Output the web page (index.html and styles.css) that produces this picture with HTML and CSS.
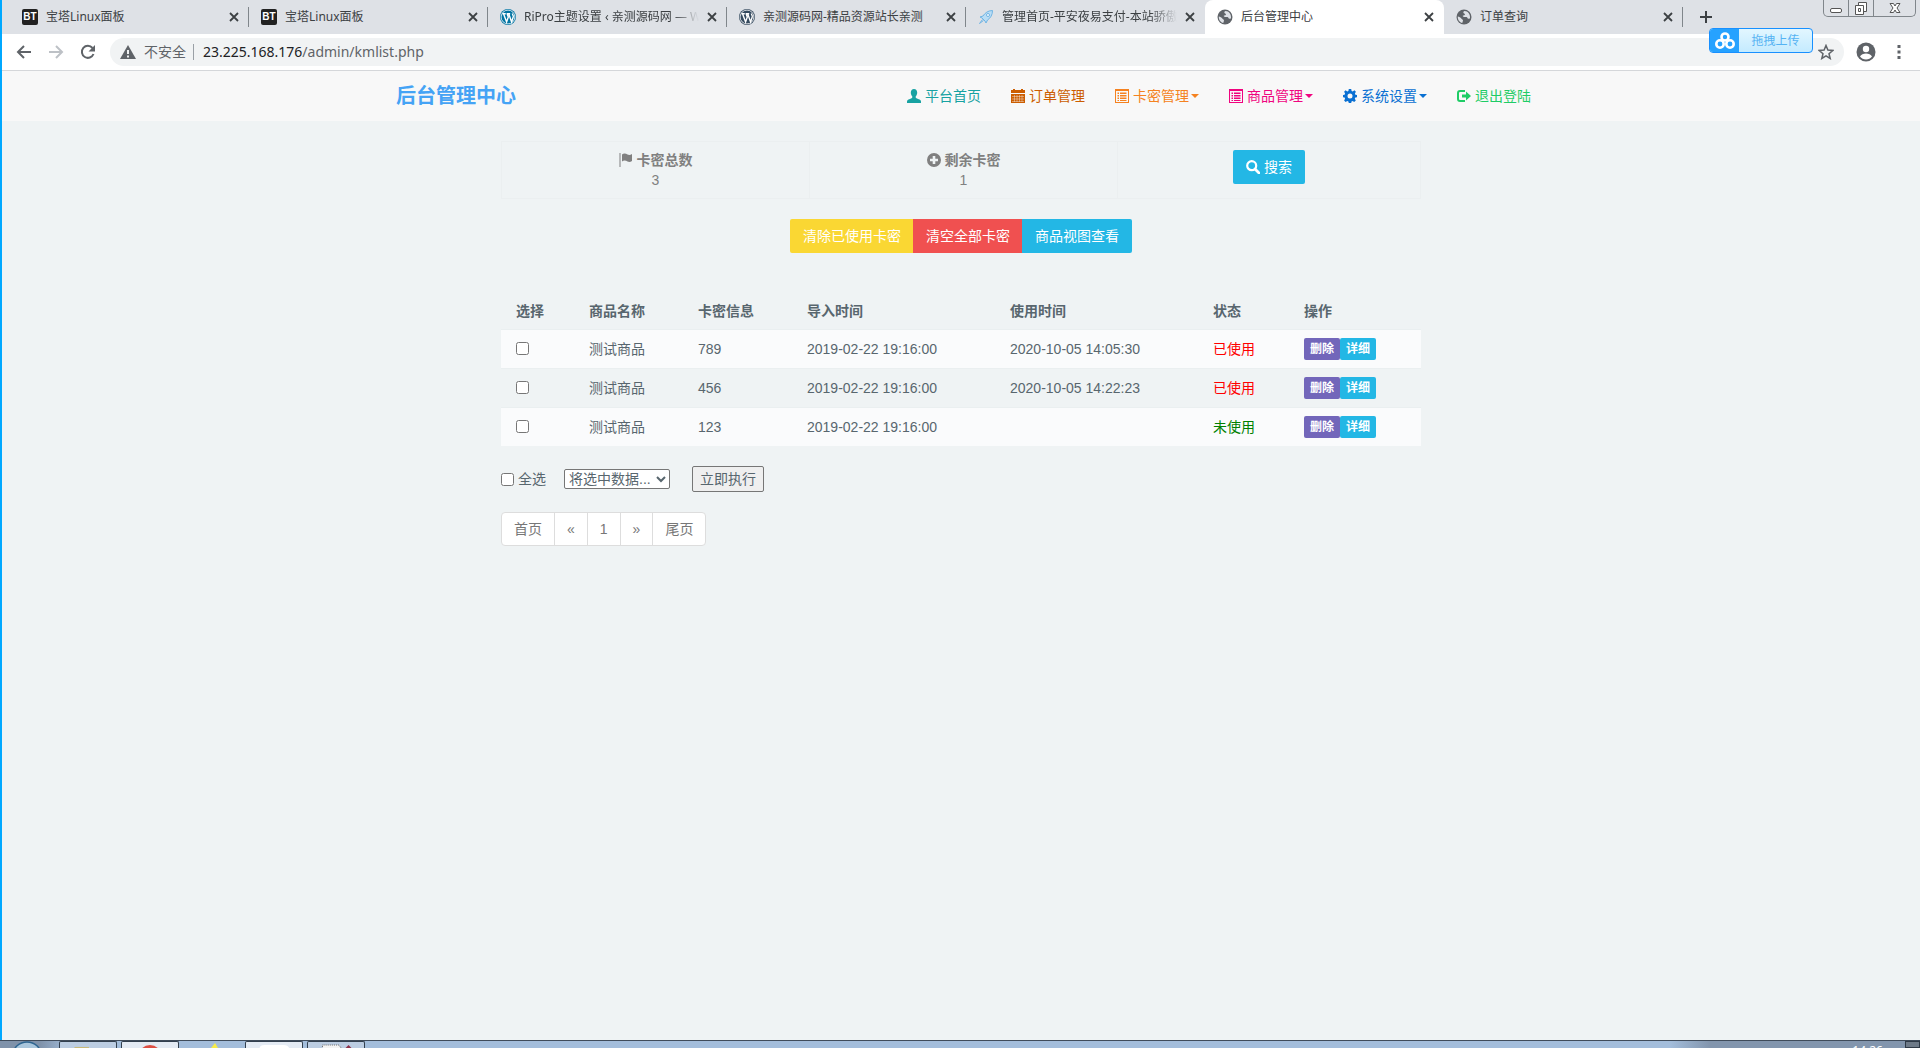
FILE: index.html
```html
<!DOCTYPE html>
<html lang="zh-CN">
<head>
<meta charset="utf-8">
<title>后台管理中心</title>
<link rel="stylesheet" href="styles.css">
</head>
<body>
<svg class="sprite" aria-hidden="true">
  <symbol id="close" viewBox="0 0 10 10"><path d="M1 1l8 8M9 1L1 9" stroke="#3c4043" stroke-width="1.8" fill="none"/></symbol>
  <symbol id="wp" viewBox="0 0 16 16"><circle cx="8" cy="8" r="8" fill="currentColor"/><circle cx="8" cy="8" r="6.9" fill="none" stroke="#fff" stroke-width=".8"/><path d="M2.4 4.8h3.4M3.6 5l3 8L8.3 8 7.2 5M6.6 4.8h3.6M8.8 5l2.8 8 1.6-5c.4-1.500-.8-2.200-.8-3.600" fill="none" stroke="#fff" stroke-width="1.400"/></symbol>
  <symbol id="globe" viewBox="0 0 16 16"><circle cx="8" cy="8" r="7.500" fill="#5f6368"/><path d="M8.500 2c-1.500.5-1.500 1.800-.3 2.500C9.500 5 9 6.500 7.500 6.500 6 6.500 7 8 8.500 8h2c1 .3 1 1.500 1.800 1.700L14 9.500C14.500 5 12 2.200 8.500 2zM1.800 7.500c1.500.5 2.700.8 3.500 2 .5 1 1.700.7 1.700 2 0 .9-.8 1.500-.6 2.600C3.500 13.500 1.600 10.800 1.800 7.500z" fill="#dee1e6"/></symbol>
</svg>
<div class="window">
<header class="browser">
  <div class="tabs">
    <div class="tab"><span class="favicon bt">BT</span><span class="name">宝塔Linux面板</span><button class="x" aria-label="关闭"><svg><use href="#close"/></svg></button></div>
    <div class="tab"><span class="favicon bt">BT</span><span class="name">宝塔Linux面板</span><button class="x" aria-label="关闭"><svg><use href="#close"/></svg></button></div>
    <div class="tab"><svg class="favicon wp-blue"><use href="#wp"/></svg><span class="name fade">RiPro主题设置 ‹ 亲测源码网 — W</span><button class="x" aria-label="关闭"><svg><use href="#close"/></svg></button></div>
    <div class="tab"><svg class="favicon wp-dark"><use href="#wp"/></svg><span class="name">亲测源码网-精品资源站长亲测</span><button class="x" aria-label="关闭"><svg><use href="#close"/></svg></button></div>
    <div class="tab before-active"><svg class="favicon" viewBox="0 0 16 16"><path d="M14.500 1.500C10 1.500 7 4 5 7L2 8l2 1 3 3 1 2 1.500-3c3-2 5-5 5-9.500z" fill="#b9ddf5" stroke="#6fb4e4"/><circle cx="10" cy="6" r="1.500" fill="#fff" stroke="#6fb4e4"/><path d="M4.500 10.500L1.500 14.500 5.500 11.500" stroke="#6fb4e4" fill="none"/></svg><span class="name fade">管理首页-平安夜易支付-本站骄傲</span><button class="x" aria-label="关闭"><svg><use href="#close"/></svg></button></div>
    <div class="tab active"><svg class="favicon"><use href="#globe"/></svg><span class="name">后台管理中心</span><button class="x" aria-label="关闭"><svg><use href="#close"/></svg></button></div>
    <div class="tab"><svg class="favicon"><use href="#globe"/></svg><span class="name">订单查询</span><button class="x" aria-label="关闭"><svg><use href="#close"/></svg></button></div>
    <button class="newtab" aria-label="新标签页"><svg viewBox="0 0 12 12"><path d="M6 0v12M0 6h12" stroke="#3c4043" stroke-width="2"/></svg></button>
  </div>
  <div class="controls">
    <button aria-label="最小化"><svg viewBox="0 0 24 16"><rect x="6.500" y="8.500" width="11" height="4" rx="1.500" fill="#fff" stroke="#555"/></svg></button>
    <button aria-label="还原"><svg viewBox="0 0 24 16"><path d="M9.500 2.500h8v9h-8z" fill="#fff" stroke="#555"/><path d="M6.500 5.500h8v9h-8z" fill="#fff" stroke="#555"/><path d="M9.500 8.500h2v3h-2z" fill="#fff" stroke="#555"/></svg></button>
    <button class="wide" aria-label="关闭窗口"><svg viewBox="0 0 24 16"><path d="M7 3.500h3.500L12 6l1.500-2.500H17L14 8l3 4.500h-3.500L12 10l-1.500 2.500H7L10 8z" fill="#fff" stroke="#555"/></svg></button>
  </div>
  <div class="toolbar">
    <button class="tool" aria-label="后退"><svg viewBox="0 0 16 16"><path d="M15 8H2M8 2L2 8l6 6" fill="none" stroke="#5f6368" stroke-width="2"/></svg></button>
    <button class="tool" aria-label="前进"><svg viewBox="0 0 16 16"><path d="M1 8h13M8 2l6 6-6 6" fill="none" stroke="#bdc1c6" stroke-width="2"/></svg></button>
    <button class="tool" aria-label="刷新"><svg viewBox="0 0 16 16"><path d="M13.500 10A6 6 0 1 1 12.500 4" fill="none" stroke="#5f6368" stroke-width="2"/><path d="M15 1v6.500H8.500z" fill="#5f6368"/></svg></button>
    <div class="address">
      <svg class="warn" viewBox="0 0 16 14"><path d="M8 0l8 14H0z" fill="#5f6368"/><path d="M8 5v4M8 10.500v2" stroke="#f1f3f4" stroke-width="2"/></svg>
      <span class="unsafe">不安全</span>
      <span class="url"><b>23.225.168.176</b>/admin/kmlist.php</span>
      <svg class="star" viewBox="0 0 16 16"><path d="M8 1.500l1.900 4.600 4.900.4-3.800 3.200 1.200 4.800L8 11.900l-4.200 2.600L5 9.700 1.200 6.500l4.900-.4z" fill="none" stroke="#5f6368" stroke-width="1.500"/></svg>
    </div>
    <button class="user" aria-label="用户"><svg viewBox="0 0 20 20"><circle cx="10" cy="10" r="9.500" fill="#5f6368"/><circle cx="10" cy="7" r="3.200" fill="#fff"/><path d="M4 14.500c1-2 3.500-3 6-3s5 1 6 3c-1.500 1.800-3.500 3-6 3s-4.500-1.200-6-3z" fill="#fff"/></svg></button>
    <button class="more" aria-label="更多"><svg viewBox="0 0 4 14"><path d="M.5 0h3v3h-3zM.5 5.500h3v3h-3zM.5 11h3v3h-3z" fill="#5f6368"/></svg></button>
  </div>
  <button class="upload"><span class="cloud"><svg viewBox="0 0 20 18"><g fill="none" stroke="#fff" stroke-width="2.600"><circle cx="10" cy="5" r="3.500"/><circle cx="5" cy="12" r="3.700"/><circle cx="15" cy="12" r="3.700"/></g></svg></span><span class="label">拖拽上传</span></button>
</header>
<nav class="navbar">
  <div class="container">
    <a class="brand" href="#">后台管理中心</a>
    <div class="menu">
      <a class="teal" href="#"><svg viewBox="0 0 14 14"><path d="M7 0c2 0 3.200 1.500 3.200 3.600 0 1.700-.7 3-1.500 3.900-.2.900.1 1.300.8 1.700 2 .9 4.500 1.400 4.500 3.300V14H0v-1.500c0-1.900 2.500-2.400 4.500-3.300.7-.4 1-.8.8-1.700-.8-.9-1.500-2.200-1.500-3.900C3.800 1.500 5 0 7 0z"/></svg>平台首页</a>
      <a class="brown" href="#"><svg viewBox="0 0 14 14"><path d="M0 1h2V0h2v1h6V0h2v1h2v3H0zM0 5h14v9H0z"/><path d="M1 7.500h12M1 10h12M1 12.500h12M3.500 6v7M6 6v7M8.500 6v7M11 6v7" stroke="#f8f8f8" stroke-width=".4"/></svg>订单管理</a>
      <a class="orange" href="#"><svg viewBox="0 0 14 14"><path fill-rule="evenodd" d="M0 0h14v14H0zM1 2h12v11H1zM2.500 3.500h1.500V5H2.500zM5 3.500h6.500V5H5zM2.500 6h1.500v1.500H2.500zM5 6h6.500v1.500H5zM2.500 8.500h1.500V10H2.500zM5 8.500h6.500V10H5zM2.500 11h1.500v1H2.500zM5 11h6.500v1H5z"/></svg>卡密管理<i class="caret"></i></a>
      <a class="pink" href="#"><svg viewBox="0 0 14 14"><path fill-rule="evenodd" d="M0 0h14v14H0zM1 2h12v11H1zM2.500 3.500h1.500V5H2.500zM5 3.500h6.500V5H5zM2.500 6h1.500v1.500H2.500zM5 6h6.500v1.500H5zM2.500 8.500h1.500V10H2.500zM5 8.500h6.500V10H5zM2.500 11h1.500v1H2.500zM5 11h6.500v1H5z"/></svg>商品管理<i class="caret"></i></a>
      <a class="blue" href="#"><svg viewBox="0 0 14 14"><path fill-rule="evenodd" d="M5.800 0h2.400l.4 1.900 1.100.5 1.700-1.100 1.500 1.500-1 1.700.5 1.200 1.600.3v2.200l-1.700.4-.5 1.200 1 1.600-1.600 1.600-1.600-1-1.100.5L8.200 14H5.800l-.4-1.500-1.100-.5-1.700 1-1.500-1.600 1-1.600-.5-1.200L0 8.200V6l1.600-.3.5-1.200-1-1.700 1.500-1.500 1.700 1.100 1.100-.5zM7 4.500a2.500 2.500 0 1 0 0 5 2.500 2.500 0 1 0 0-5z"/></svg>系统设置<i class="caret"></i></a>
      <a class="green" href="#"><svg viewBox="0 0 14 14"><path d="M8 2H3Q1 2 1 4v6q0 2 2 2h5" fill="none" stroke="currentColor" stroke-width="2"/><path d="M9 2.500L14 7l-5 4.500V8.500H5v-3h4z"/></svg>退出登陆</a>
    </div>
  </div>
</nav>
<main class="content">
  <section class="stats">
    <div class="stat"><strong><svg viewBox="0 0 14 14"><path d="M.5 0h1v14h-1zM3 1.500c2-1.500 4-.8 5.500 0s3 .5 4.500-.5V8c-1.500 1-3 1.300-4.500.5S5 7 3 8.500z"/></svg>卡密总数</strong><span>3</span></div>
    <div class="stat"><strong><svg viewBox="0 0 14 14"><path fill-rule="evenodd" d="M7 0a7 7 0 1 0 0 14A7 7 0 1 0 7 0zM5.700 3h2.600v2.700H11v2.600H8.300V11H5.700V8.300H3V5.700h2.700z"/></svg>剩余卡密</strong><span>1</span></div>
    <div class="stat"><button class="btn info rounded"><svg viewBox="0 0 14 14"><circle cx="5.700" cy="5.700" r="4.500" fill="none" stroke="#fff" stroke-width="2.200"/><path d="M9 9l4 4" stroke="#fff" stroke-width="2.800" stroke-linecap="round"/></svg>搜索</button></div>
  </section>
  <div class="actions"><button class="btn warning">清除已使用卡密</button><button class="btn danger">清空全部卡密</button><button class="btn info">商品视图查看</button></div>
  <table class="cards">
    <colgroup><col class="c-pick"><col class="c-mid"><col class="c-mid"><col class="c-time"><col class="c-time"><col class="c-state"><col></colgroup>
    <thead><tr><th>选择</th><th>商品名称</th><th>卡密信息</th><th>导入时间</th><th>使用时间</th><th>状态</th><th>操作</th></tr></thead>
    <tbody>
      <tr><td><input type="checkbox" aria-label="选择 789"></td><td>测试商品</td><td>789</td><td>2019-02-22 19:16:00</td><td>2020-10-05 14:05:30</td><td class="used">已使用</td><td><div class="ops"><button class="xs purple">删除</button><button class="xs info">详细</button></div></td></tr>
      <tr><td><input type="checkbox" aria-label="选择 456"></td><td>测试商品</td><td>456</td><td>2019-02-22 19:16:00</td><td>2020-10-05 14:22:23</td><td class="used">已使用</td><td><div class="ops"><button class="xs purple">删除</button><button class="xs info">详细</button></div></td></tr>
      <tr><td><input type="checkbox" aria-label="选择 123"></td><td>测试商品</td><td>123</td><td>2019-02-22 19:16:00</td><td></td><td class="unused">未使用</td><td><div class="ops"><button class="xs purple">删除</button><button class="xs info">详细</button></div></td></tr>
    </tbody>
  </table>
  <form class="batch">
    <label><input type="checkbox">全选</label>
    <select aria-label="批量操作"><option>将选中数据...</option></select>
    <button type="button">立即执行</button>
  </form>
  <nav class="pages"><a href="#">首页</a><a href="#">«</a><a href="#">1</a><a href="#">»</a><a href="#">尾页</a></nav>
</main>
</div>
<footer class="taskbar">
  <svg class="start" viewBox="0 0 32 7"><ellipse cx="16" cy="14" rx="14" ry="13" fill="#a9c6dc" stroke="#2e6590" stroke-width="1.500"/></svg>
  <div class="task"><svg viewBox="0 0 58 7"><path d="M15 5h15v2H15z" fill="#c8b878"/></svg></div>
  <div class="task bright"><svg viewBox="0 0 58 7"><circle cx="29" cy="15" r="12" fill="#dd4f43"/></svg></div>
  <div class="plain"><svg viewBox="0 0 58 7"><path d="M28 7l4-5 3 5z" fill="#f7ec4a"/></svg></div>
  <div class="task bright"><svg viewBox="0 0 58 7"><path d="M14 7q0-4 5-4h20q5 0 6 4z" fill="#fff"/></svg></div>
  <div class="task"><svg viewBox="0 0 58 7"><path d="M15 7V3h17l3 4" fill="#f4f4f4" stroke="#666" stroke-dasharray="1 1"/><path d="M38 7l4-4 3 3-1 1z" fill="#8c3048"/></svg></div>
  <span class="clock">14:26</span>
  <button class="desktop" aria-label="显示桌面"></button>
</footer>
</body>
</html>
```
FILE: styles.css
```css
* { box-sizing: border-box; }
body {
  margin: 0;
  height: 100vh;
  display: flex;
  flex-direction: column;
  overflow: hidden;
  background: #eff3f4;
  color: #58666e;
  font: 14px/20px "Liberation Sans", "Noto Sans CJK SC", sans-serif;
}
button, select, input { font: inherit; color: inherit; margin: 0; }
button { padding: 0; border: 0; background: none; }
a { color: inherit; text-decoration: none; }
svg { display: block; flex: none; }
.sprite { position: absolute; width: 0; height: 0; }
.window { flex: 1; min-height: 0; border-left: 2px solid #00a8ff; }

/* browser frame */
.browser { position: relative; background: #dee1e6; font-family: "Noto Sans", "Noto Sans CJK SC", sans-serif; }
.tabs { display: flex; height: 34px; padding: 0 180px 0 8px; font-size: 12px; color: #3c4043; }
.tab { position: relative; flex: 0 1 239px; min-width: 0; display: flex; align-items: center; padding: 0 10px 0 12px; }
.tab::after { content: ""; position: absolute; right: 0; top: 7px; width: 1px; height: 20px; background: #80868b; }
.tab.active { background: #fff; border-radius: 8px 8px 0 0; }
.tab.active::after, .tab.before-active::after { display: none; }
.favicon { width: 16px; height: 16px; margin-right: 8px; }
.bt { background: #222; color: #fff; border-radius: 2px; font: bold 10px/16px "Liberation Sans", sans-serif; text-align: center; }
.wp-blue { color: #0073a2; }
.wp-dark { color: #34495e; }
.name { flex: 1; min-width: 0; overflow: hidden; white-space: nowrap; }
.fade { -webkit-mask-image: linear-gradient(90deg, #000 85%, transparent); mask-image: linear-gradient(90deg, #000 85%, transparent); }
.x { width: 10px; height: 10px; margin-left: 8px; }
.x svg { width: 10px; height: 10px; }
.newtab { width: 46px; display: grid; place-items: center; }
.newtab svg { width: 12px; height: 12px; }
.controls { position: absolute; top: 0; right: 4px; display: flex; border: 1px solid #80868b; border-top: 0; border-radius: 0 0 5px 5px; }
.controls button { width: 25px; height: 16px; border-right: 1px solid #80868b; }
.controls .wide { width: 41px; border: 0; }
.controls svg { width: 24px; height: 16px; margin: 0 auto; }
.toolbar { display: flex; align-items: center; height: 37px; padding: 0 19px 0 14px; background: #fff; border-bottom: 1px solid #d5d7da; font-size: 14px; }
.tool { width: 16px; height: 16px; margin-right: 16px; }
.tool:nth-child(3) { margin-right: 14px; }
.tool svg { width: 16px; height: 16px; }
.address { flex: 1; display: flex; align-items: center; height: 28px; padding: 0 10px; border-radius: 14px; background: #f1f3f4; color: #5f6368; }
.warn { width: 16px; height: 14px; margin-right: 8px; }
.unsafe { padding-right: 7px; border-right: 1px solid #9aa0a6; line-height: 16px; }
.url { flex: 1; padding-left: 9px; }
.url b { font-weight: normal; color: #202124; }
.star { width: 16px; height: 16px; }
.user { margin: 0 21px 0 12px; }
.user svg { width: 20px; height: 20px; }
.more svg { width: 4px; height: 14px; }
.upload { position: absolute; right: 107px; top: 28px; display: flex; width: 104px; height: 25px; border: 1px solid #1890ff; border-radius: 4px; overflow: hidden; background: linear-gradient(#e2f6ff, #c4ebff); color: #55b3f3; font-size: 12px; line-height: 23px; }
.cloud { width: 29px; height: 100%; display: grid; place-items: center; background: #26a2ff; }
.cloud svg { width: 20px; height: 18px; }
.label { flex: 1; text-align: center; }

/* site navigation */
.navbar { background: #f8f8f8; }
.container { display: flex; justify-content: space-between; align-items: center; max-width: 1170px; height: 50px; margin: 0 auto; }
.brand { padding-left: 20px; color: #45a3f5; font-size: 20px; font-weight: bold; }
.menu { display: flex; }
.menu a { display: flex; align-items: center; padding: 15px; }
.menu svg, .stat svg { width: 14px; height: 14px; margin-right: 4px; fill: currentColor; }
.caret { margin-left: 2px; border: 4px solid transparent; border-top-color: currentColor; border-bottom: 0; }
.teal { color: #17a2a2; }
.brown { color: #cc5d00; }
.orange { color: #f58220; }
.pink { color: #f0047f; }
.blue { color: #0a70d2; }
.green { color: #1fcc66; }

/* card list */
.content { max-width: 920px; margin: 20px auto 0; }
.stats { display: grid; grid-template-columns: 308px 308px 1fr; height: 58px; border: 1px solid #ebeff0; }
.stat { display: flex; flex-direction: column; align-items: center; padding-top: 8px; color: #808080; border-right: 1px solid #ebeff0; }
.stat:last-child { border: 0; }
.stat strong { display: flex; align-items: center; }
.btn { display: flex; align-items: center; height: 34px; padding: 0 13px; color: #fff; }
.rounded { border-radius: 2px; }
.info { background: #23b7e5; }
.warning { background: #fad733; }
.danger { background: #f05050; }
.purple { background: #7266ba; }
.actions { display: flex; justify-content: center; margin: 20px 0 38px; }
.actions .btn + .btn { margin-left: -1px; }
.actions .btn:first-child { border-radius: 2px 0 0 2px; }
.actions .btn:last-child { border-radius: 0 2px 2px 0; }
.cards { width: 100%; table-layout: fixed; border-collapse: collapse; text-align: left; }
.cards th, .cards td { height: 39px; padding: 0 0 0 15px; border-top: 1px solid #eaeff0; }
.cards th { height: 38px; padding-top: 2px; border: 0; }
.c-pick { width: 73px; }
.c-mid { width: 109px; }
.c-time { width: 203px; }
.c-state { width: 91px; }
.cards tbody tr:nth-child(odd) { background: #fafbfc; }
input[type="checkbox"] { display: block; width: 13px; height: 13px; }
.used { color: #f00; }
.unused { color: #008000; }
.ops { display: flex; }
.xs { width: 36px; height: 22px; border-radius: 2px; color: #fff; font-size: 12px; font-weight: bold; line-height: 22px; }
.batch { display: flex; align-items: center; height: 26px; margin: 20px 0; }
.batch label { display: flex; align-items: center; gap: 4px; width: 63px; }
.batch select { width: 106px; height: 20px; padding: 0; border: 1px solid #767676; border-radius: 2px; background: #fff; line-height: 18px; }
.batch button { width: 72px; height: 26px; margin-left: 22px; border: 1px solid #767676; border-radius: 2px; background: #efefef; }
.pages { display: flex; width: fit-content; border: 1px solid #ddd; border-radius: 4px; background: #fff; color: #777; }
.pages a { padding: 6px 12px; border-left: 1px solid #ddd; }
.pages a:first-child { border: 0; }

/* taskbar */
.taskbar { display: flex; flex: none; height: 8px; overflow: hidden; border-top: 1px solid #3f4b5a; background: linear-gradient(90deg, #7f92aa 0 40px, #a3bddb 70px calc(100% - 250px), #8295ad calc(100% - 210px)); }
.start { width: 32px; height: 7px; margin: 0 16px 0 11px; }
.task, .plain { width: 58px; height: 7px; margin-right: 4px; }
.task { border: 1px solid #33404f; border-bottom: 0; border-radius: 2px 2px 0 0; background: #bccde2; }
.bright { background: #e4ebf4; }
.task svg, .plain svg { width: 100%; height: 7px; }
.clock { margin: 3px 22px 0 auto; color: #fff; font: 12px/14px "Noto Sans", sans-serif; }
.desktop { width: 15px; height: 7px; border: 1px solid #2f3a47; background: #6e7a88; }
```
